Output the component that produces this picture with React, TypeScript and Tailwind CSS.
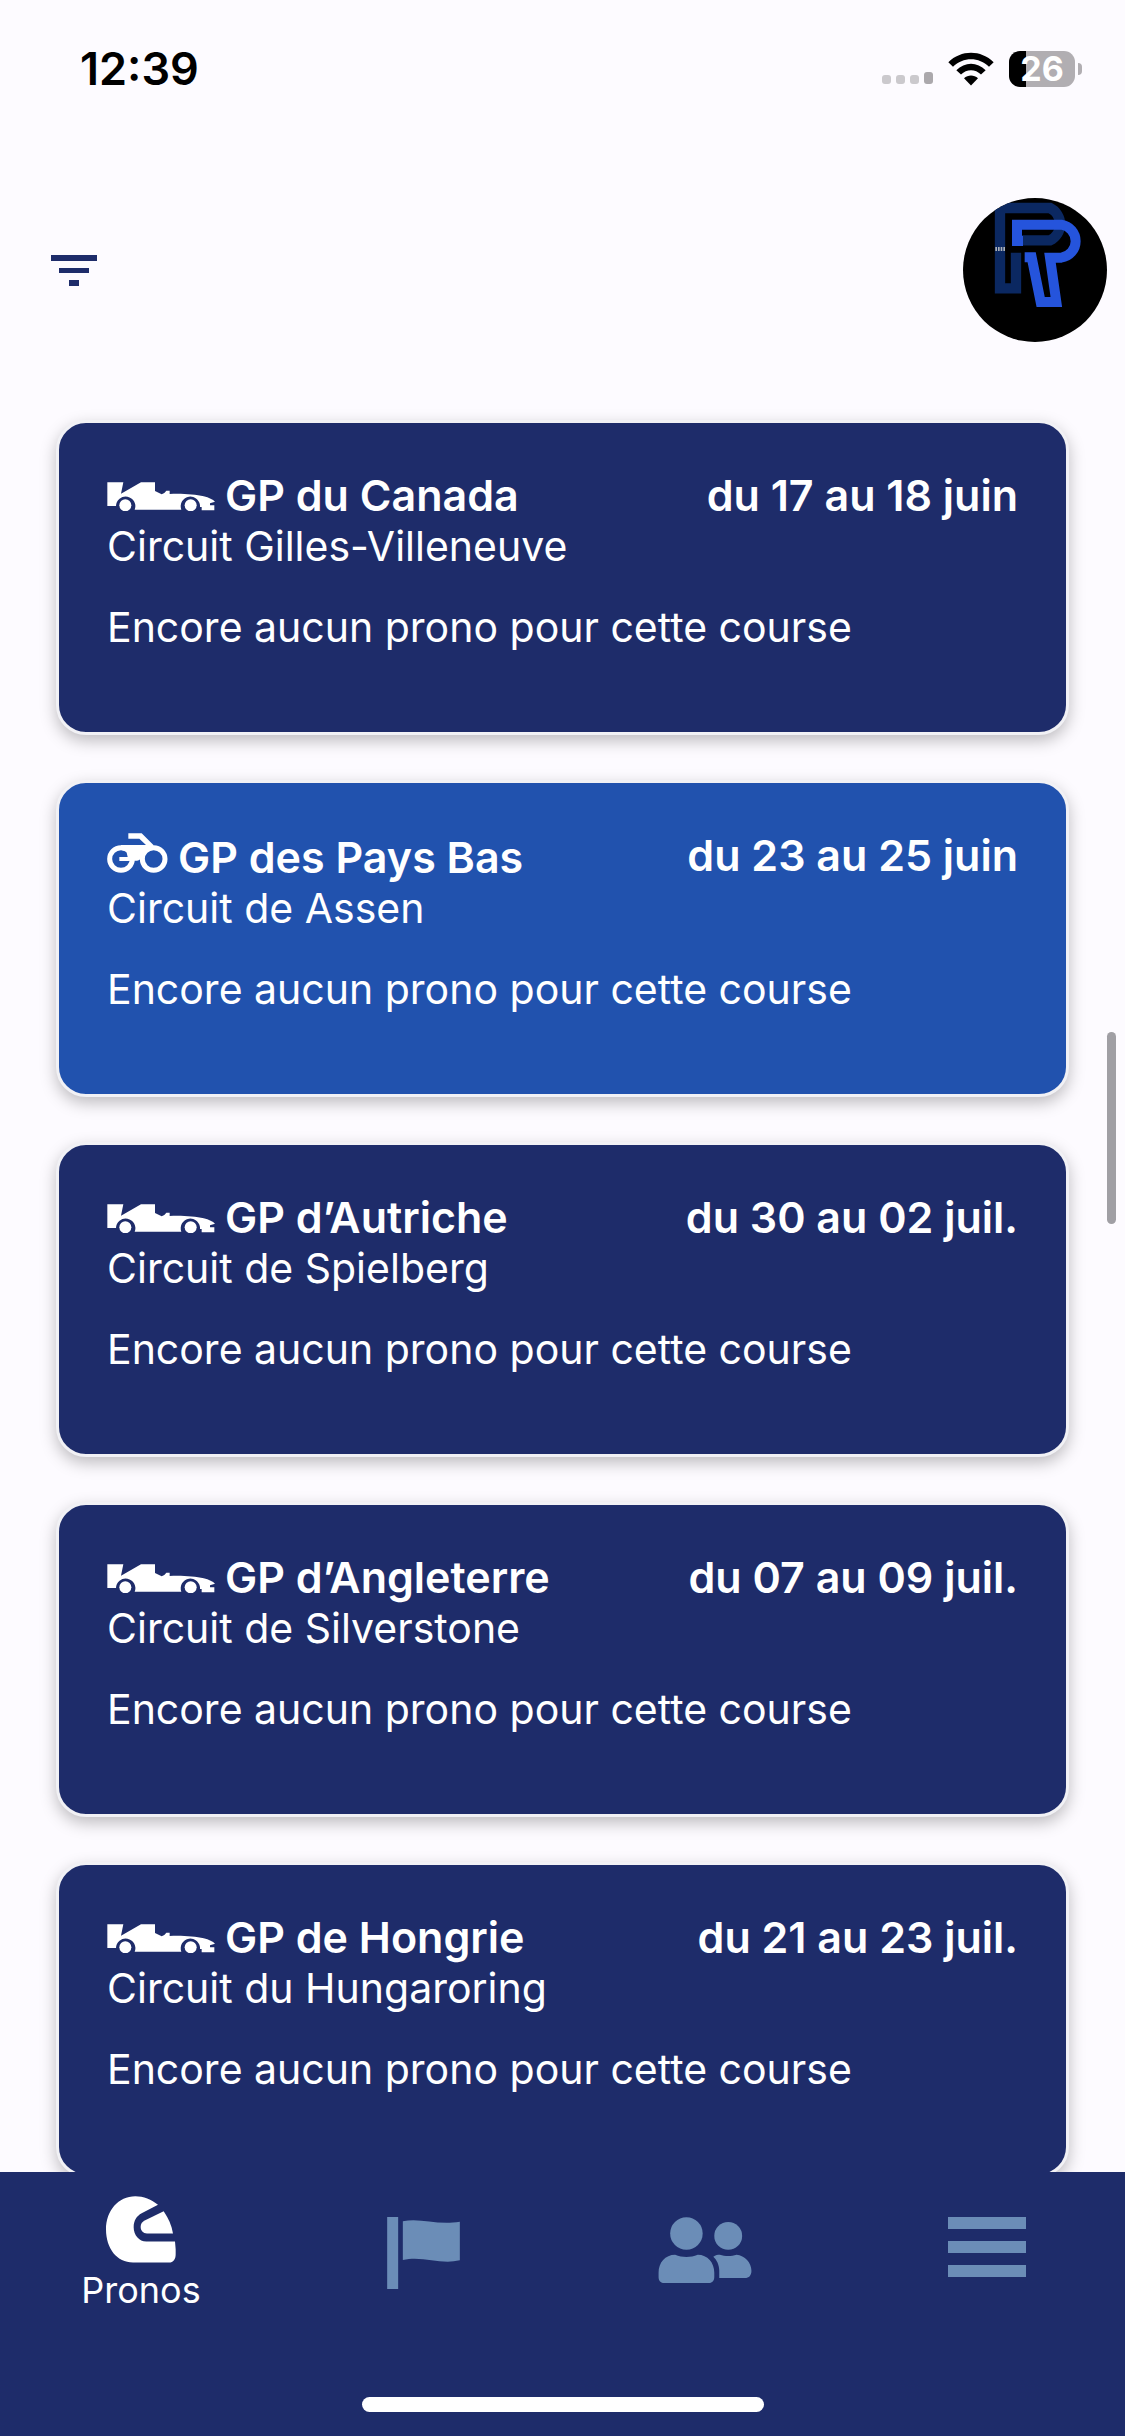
import React from "react";

type Race = {
  kind: "car" | "bike";
  title: string;
  circuit: string;
  date: string;
};

const races: Race[] = [
  { kind: "car", title: "GP du Canada", circuit: "Circuit Gilles-Villeneuve", date: "du 17 au 18 juin" },
  { kind: "bike", title: "GP des Pays Bas", circuit: "Circuit de Assen", date: "du 23 au 25 juin" },
  { kind: "car", title: "GP d’Autriche", circuit: "Circuit de Spielberg", date: "du 30 au 02 juil." },
  { kind: "car", title: "GP d’Angleterre", circuit: "Circuit de Silverstone", date: "du 07 au 09 juil." },
  { kind: "car", title: "GP de Hongrie", circuit: "Circuit du Hungaroring", date: "du 21 au 23 juil." },
];

const CarIcon = () => (
  <svg className="w-[108px] h-[29px] shrink-0" viewBox="50 65 324 87" fill="currentColor" aria-hidden="true">
    <path d="M51 66H99L92 100L152 66H194V92L214 102L222 98L228 91H238V101C272 99 315 102 340 108C356 112 368 118 374 124L359 129V135H372V150H334V140H329A29 29 0 1 0 273 148H133A29 29 0 1 0 77 137H51Z" />
    <circle cx="105" cy="135" r="18" />
    <circle cx="301" cy="135" r="18" />
  </svg>
);

const BikeIcon = () => (
  <svg className="w-[61px] h-[40px] shrink-0" viewBox="50 57 183 120" aria-hidden="true">
    <path
      fill="currentColor"
      d="M114 58H154L190 94L178 108L156 128C152 134 148 138 140 140H129L112 141H87V129H112L108 112L92 107V93H167L147 74H114Z"
    />
    <circle cx="92" cy="135" r="34" fill="none" stroke="currentColor" strokeWidth="15" />
    <circle cx="190" cy="135" r="34" fill="none" stroke="currentColor" strokeWidth="15" />
  </svg>
);

const RaceCard = ({ race }: { race: Race }) => {
  const bg = race.kind === "bike" ? "bg-[#2152ae]" : "bg-[#1e2c6a]";
  return (
    <article
      className={`${bg} rounded-[30px] border-[3px] border-[#f1f1f5] px-12 pt-[47px] pb-[79px] text-[41px] leading-[51px] text-white shadow-[0_6px_16px_rgba(0,0,0,0.25)]`}
    >
      <div className="flex items-start justify-between text-[43px] leading-[51px] font-semibold">
        <h2 className={`flex gap-[10px] ${race.kind === "bike" ? "pt-[2px]" : ""}`}>
          <span className="flex h-[41px] items-end">
            {race.kind === "bike" ? <BikeIcon /> : <CarIcon />}
          </span>
          {race.title}
        </h2>
        <p>{race.date}</p>
      </div>
      <p>{race.circuit}</p>
      <p className="mt-[30px]">Encore aucun prono pour cette course</p>
    </article>
  );
};

const StatusBar = () => (
  <div className="flex items-start justify-between pt-[45px] pl-[80px] pr-[43px] text-black">
    <p className="text-[45px] leading-[48px] font-semibold">12:39</p>
    <div className="flex items-center gap-[15px] pt-[6px]">
      <svg className="w-[51px] h-[36px]" viewBox="0 0 51 36" aria-hidden="true">
        <rect x="0" y="24" width="9" height="9" rx="3" fill="#cbc9cd" />
        <rect x="14" y="24" width="9" height="9" rx="3" fill="#cbc9cd" />
        <rect x="28" y="24" width="9" height="9" rx="3" fill="#cbc9cd" />
        <rect x="42" y="21" width="9" height="12" rx="3" fill="#aba8ac" />
      </svg>
      <svg className="w-[46px] h-[34px]" viewBox="264 65 138 101" fill="currentColor" aria-hidden="true">
        <path d="M265 95C303 57 363 57 401 95L387 109C357 79 309 79 279 109Z" />
        <path d="M289 119C314 93 352 93 377 119L363 132C346 115 320 115 303 132Z" />
        <path d="M333 165L312 143C324 132 342 132 354 143Z" />
      </svg>
      <div className="flex items-center gap-[3px]">
        <div className="flex h-9 w-[66px] items-center justify-center rounded-[11px] bg-[linear-gradient(90deg,#000_26%,#b1aeb2_26%)] text-[34px] leading-9 font-bold text-white">
          26
        </div>
        <div className="h-3 w-1 rounded-r-full bg-[#b1aeb2]" />
      </div>
    </div>
  </div>
);

const Avatar = () => (
  <button aria-label="Profil" className="size-36 overflow-hidden rounded-full bg-black">
    <svg className="size-full" viewBox="69 54 432 432" fill="none" aria-hidden="true">
      <path d="M180 84H330A54 54 0 0 1 330 181H246M180 84V325H228V205" stroke="#0b2861" strokeWidth="31" />
      <path d="M196 204H360V218H196Z" fill="#000" />
      <path
        d="M249 183H231V134H364A50 50 0 0 1 364 233H330L349 366H302L275 232H254"
        stroke="#2554dc"
        strokeWidth="30"
      />
      <path d="M166 207H197" stroke="#aab0b8" strokeWidth="12" strokeDasharray="5 3" />
    </svg>
  </button>
);

const HelmetIcon = () => (
  <svg className="w-[70px] h-[67px]" viewBox="141 107 210 200" fill="currentColor" aria-hidden="true">
    <path d="M297 133C278 116 253 107 229 107C178 107 141 150 141 207C141 264 174 306 222 306H330C343 306 350 296 350 281V266L348 243H262C240 243 224 223 224 200C224 180 233 166 248 158Z" />
    <path d="M314 152C328 172 338 194 342 219H264C252 219 245 211 245 199C245 190 249 184 257 180Z" />
  </svg>
);

const FlagIcon = () => (
  <svg className="w-[73px] h-[72px]" viewBox="981 171 218 216" fill="currentColor" aria-hidden="true">
    <path d="M981 171H1014V387H981Z" />
    <path d="M1028 184C1080 172 1130 197 1199 185V301C1140 315 1090 287 1028 300Z" />
  </svg>
);

const PeopleIcon = () => (
  <svg className="w-[94px] h-[66px]" viewBox="113 170 282 199" fill="currentColor" aria-hidden="true">
    <circle cx="198" cy="220" r="49" />
    <circle cx="324" cy="227" r="42" />
    <path d="M164 284C186 293 210 293 232 284C262 284 282 308 282 338V350C282 362 276 369 264 369H132C120 369 114 362 114 350V338C114 308 134 284 164 284Z" />
    <path d="M279 290C286 285 292 284 299 284C314 289 334 289 349 284C374 286 394 308 394 332C394 346 387 354 374 354H297V332C297 314 289 299 279 290Z" />
  </svg>
);

const MenuIcon = () => (
  <svg className="w-[78px] h-[60px]" viewBox="0 0 78 60" fill="currentColor" aria-hidden="true">
    <path d="M0 0H78V12H0ZM0 24H78V36H0ZM0 48H78V60H0Z" />
  </svg>
);

const BottomNav = () => (
  <nav className="flex h-[264px] shrink-0 flex-col justify-between overflow-hidden bg-[#1e2c6a] pb-6 text-[#6b8db7]">
    <div className="-mr-[3px] grid grid-cols-4">
      <a href="#pronos" className="flex flex-col items-center pt-6 text-white">
        <HelmetIcon />
        <span className="mt-1 text-[36px] leading-[46px]">Pronos</span>
      </a>
      <a href="#courses" aria-label="Courses" className="flex justify-center pt-[45px]">
        <FlagIcon />
      </a>
      <a href="#groupes" aria-label="Groupes" className="flex justify-center pt-[45px]">
        <PeopleIcon />
      </a>
      <a href="#menu" aria-label="Menu" className="flex justify-center pt-[45px]">
        <MenuIcon />
      </a>
    </div>
    <div className="h-[15px] w-[402px] self-center rounded-full bg-white" />
  </nav>
);

export default function App() {
  return (
    <div className="flex h-screen flex-col bg-[#fdfbff] font-['Inter',sans-serif]">
      <StatusBar />
      <header className="flex items-center justify-between pt-[105px] pr-[18px] pl-[51px]">
        <button aria-label="Filtrer" className="text-[#1e2c6a]">
          <svg className="w-[46px] h-[31px]" viewBox="0 0 46 31" fill="currentColor" aria-hidden="true">
            <path d="M0 0H46V6H0ZM8 13H38V18H8ZM18 25H28V31H18Z" />
          </svg>
        </button>
        <Avatar />
      </header>
      <main className="relative min-h-0 flex-1 overflow-hidden px-14 pt-[78px]">
        <div className="flex flex-col gap-[45px]">
          {races.map((race) => (
            <RaceCard key={race.title} race={race} />
          ))}
        </div>
        <div className="absolute top-[690px] right-[9px] h-[192px] w-[9px] rounded-full bg-[#a09fa4]" />
      </main>
      <BottomNav />
    </div>
  );
}
